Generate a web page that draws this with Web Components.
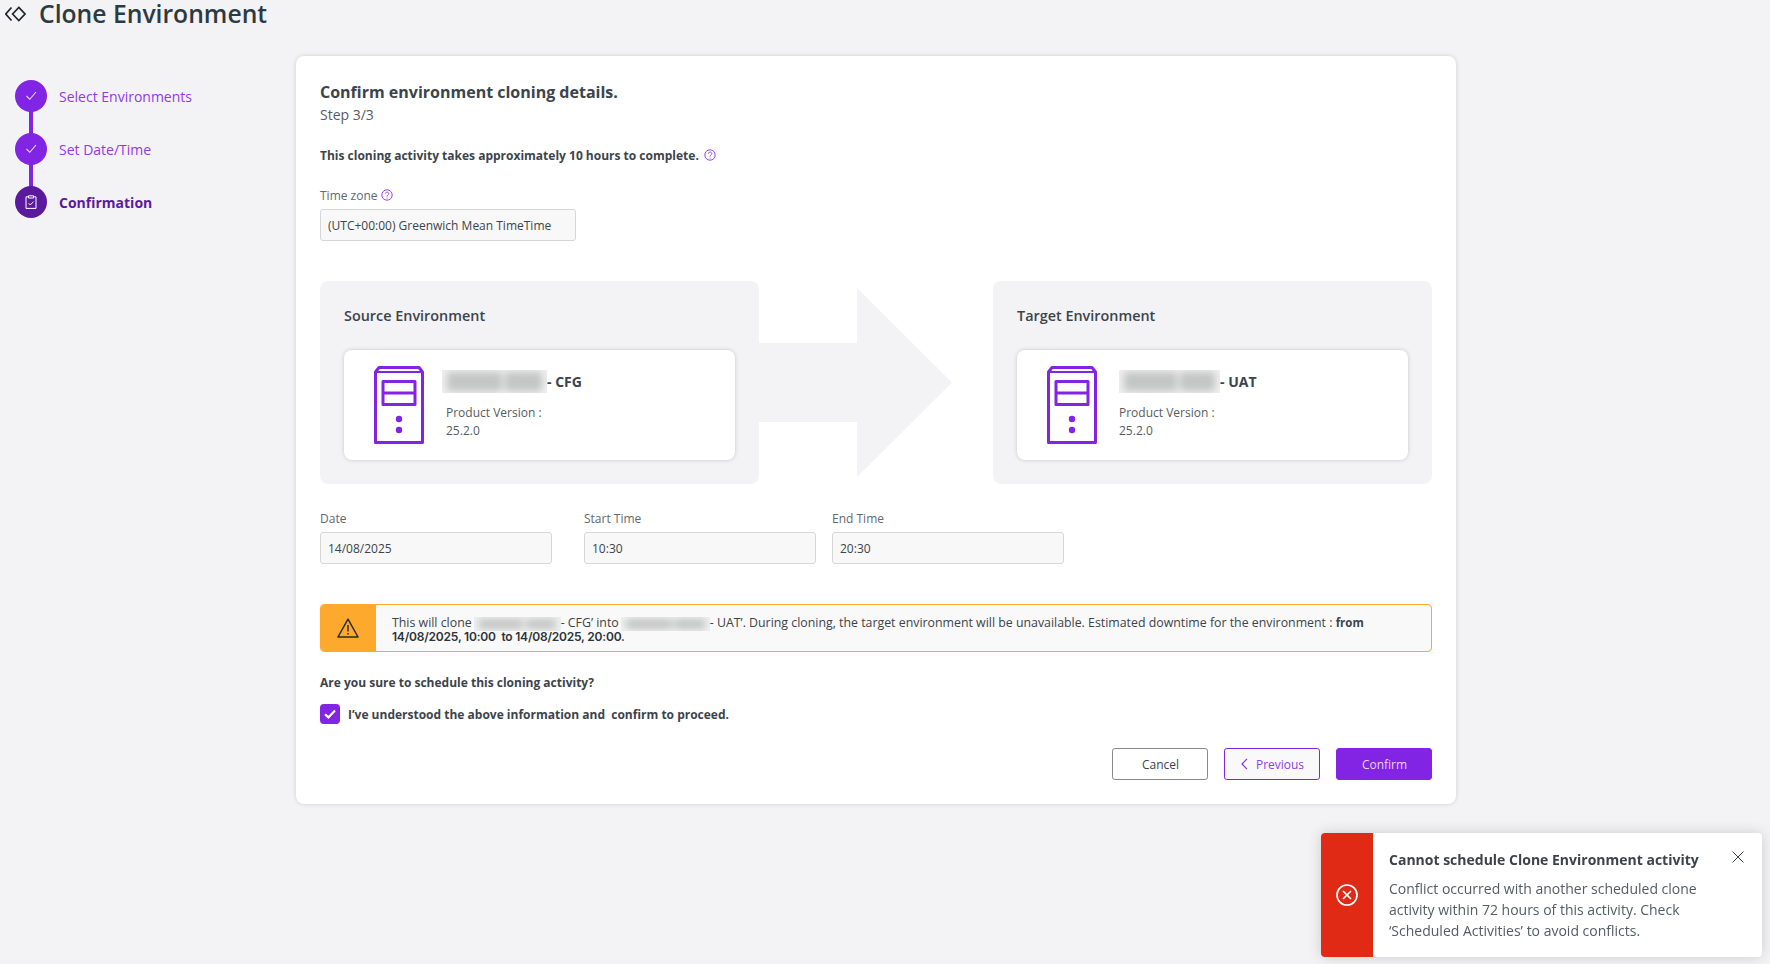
<!DOCTYPE html>
<html lang="en">
<head>
<meta charset="utf-8">
<title>Clone Environment</title>
<style>
  html, body { margin: 0; height: 100%; }
  body {
    background: #f3f2f5;
    color: #3c444b;
    font-family: "Open Sans", "Noto Sans", sans-serif;
    font-size: 13px;
    overflow: hidden;
  }
</style>
</head>
<body>
<clone-page></clone-page>
<error-toast heading="Cannot schedule Clone Environment activity">
  Conflict occurred with another scheduled clone activity within 72 hours of this activity. Check ‘Scheduled Activities’ to avoid conflicts.
</error-toast>

<script>
const CHECK = '<path d="M1.500 6 4.800 9.300 11 2" fill="none" stroke="#eadcf9" stroke-width="1.100"/>';
const HELP = `<svg width="12" height="12" viewBox="0 0 12 12" fill="none" stroke="#9a45ee" stroke-width="1">
  <circle cx="6" cy="6" r="5.200"/><path d="M4.300 4.700C4.400 2.600 7.800 2.700 7.800 4.700 7.800 6 6 6 6 7.600"/><path d="M6 8.700v1"/></svg>`;

class BlurMask extends HTMLElement {
  connectedCallback() {
    this.attachShadow({ mode: 'open' });
    const w = this.getAttribute('w'), h = this.getAttribute('h');
    this.shadowRoot.innerHTML = `
    <style>
      :host { display: inline-block; width: ${w}px; height: ${h}px; overflow: hidden; background: #efefef; vertical-align: middle; }
      .row { display: flex; gap: 3%; height: 100%; padding: 2px 5px; box-sizing: border-box; filter: blur(3.500px); }
      .row span { background: #c4c5c5; height: 100%; border-radius: 3px; }
      .row span:first-child { flex: 3; }
      .row span:last-child { flex: 2; }
    </style>
    <div class="row"><span></span><span></span></div>`;
  }
}

class PageHeader extends HTMLElement {
  connectedCallback() {
    this.attachShadow({ mode: 'open' });
    this.shadowRoot.innerHTML = `
    <style>
      :host { display: flex; align-items: center; height: 28px; padding-left: 5px; }
      svg { width: 21px; height: 16px; flex: none; }
      h1 { margin: 0 0 0 13px; font-size: 24.700px; line-height: 28px; font-weight: 600; color: #2c3a42; }
    </style>
    <svg viewBox="0 0 21 16" fill="none" stroke="#22272b" stroke-width="1.700">
      <path d="M6.500 1.500 0.800 8l5.700 6.500"/>
      <path d="M13.800 1.400 20 8l-6.200 6.600L7.600 8z"/>
    </svg>
    <h1><slot></slot></h1>`;
  }
}

class StepItem extends HTMLElement {
  connectedCallback() {
    this.attachShadow({ mode: 'open' });
    const current = this.hasAttribute('current');
    const icon = current
      ? `<svg width="12" height="14" viewBox="0 0 12 14" fill="none" stroke="#fff" stroke-width="1">
           <path d="M3.500 1.800H1v11.600h10V1.800H8.500"/><path d="M3.500 .8h5v2.200h-5z"/>
           <path d="M3.600 8.200 5.300 10l3.200-3.400" stroke-width=".9"/></svg>`
      : `<svg width="13" height="12" viewBox="0 0 13 12">${CHECK}</svg>`;
    this.shadowRoot.innerHTML = `
    <style>
      :host { display: flex; align-items: center; height: 32px; gap: 12px; position: relative; }
      .dot { width: 32px; height: 32px; border-radius: 50%; background: ${current ? '#5b1a9d' : '#8224e3'};
             display: flex; align-items: center; justify-content: center; flex: none; }
      .label { font-size: 14px; color: ${current ? '#5b1a9d' : '#9239ea'}; font-weight: ${current ? 700 : 400}; }
    </style>
    <span class="dot">${icon}</span><span class="label"><slot></slot></span>`;
  }
}

class StepList extends HTMLElement {
  connectedCallback() {
    this.attachShadow({ mode: 'open' });
    this.shadowRoot.innerHTML = `
    <style>
      :host { display: block; width: 296px; box-sizing: border-box; padding: 24px 0 0 15px; flex: none; position: relative; }
      .items { display: flex; flex-direction: column; gap: 21px; position: relative; }
      .line { position: absolute; left: 14px; top: 16px; bottom: 16px; width: 4px; background: #8224e3; }
      ::slotted(step-item) { z-index: 1; }
    </style>
    <div class="items"><div class="line"></div><slot></slot></div>`;
  }
}

class TextField extends HTMLElement {
  connectedCallback() {
    this.attachShadow({ mode: 'open' });
    const help = this.hasAttribute('help') ? HELP : '';
    this.shadowRoot.innerHTML = `
    <style>
      :host { display: block; width: ${this.getAttribute('width') || 232}px; }
      .label { display: flex; align-items: center; gap: 3px; height: 16px; margin-bottom: 6px; font-size: 12px; color: #62696f; }
      .box { height: 32px; box-sizing: border-box; border: 1px solid #d6d6d6; border-radius: 3px; background: #f8f8f8;
             display: flex; align-items: center; padding: 0 7px; font-size: 12px; color: #3c444b; white-space: nowrap; }
    </style>
    <div class="label">${this.getAttribute('label')}${help}</div>
    <div class="box"><slot></slot></div>`;
  }
}

class ServerIcon extends HTMLElement {
  connectedCallback() {
    this.attachShadow({ mode: 'open' });
    this.shadowRoot.innerHTML = `
    <style>:host { display: block; width: 50px; height: 78px; flex: none; } svg { display: block; }</style>
    <svg width="50" height="78" viewBox="0 0 50 78" fill="none" stroke="#8224e3">
      <path stroke-width="3" stroke-linejoin="round" d="M1.500 6 5 1.500h40L48.500 6v70.500H1.500z"/>
      <path stroke-width="2" d="M1.500 6h47"/>
      <path stroke-width="3" stroke-linejoin="round" d="M9 15.500h32v23H9zM9 27h32"/>
      <circle cx="25" cy="53" r="3.200" fill="#8224e3" stroke="none"/>
      <circle cx="25" cy="64" r="3.200" fill="#8224e3" stroke="none"/>
    </svg>`;
  }
}

class EnvPanel extends HTMLElement {
  connectedCallback() {
    this.attachShadow({ mode: 'open' });
    const shift = this.getAttribute('shift') || 0;
    this.shadowRoot.innerHTML = `
    <style>
      :host { display: block; background: #f3f2f5; border-radius: 8px; padding: 24px; height: 203px; box-sizing: border-box; position: relative; }
      h3 { margin: 0 0 23px; font-size: 14.400px; line-height: 22px; font-weight: 600; color: #3c444b; }
      .tile { background: #fff; border-radius: 8px; box-shadow: 0 0 4px rgba(0,0,0,.18); height: 110px; box-sizing: border-box;
              display: flex; align-items: center; padding-left: 30px; gap: 22px; }
      .name { display: flex; align-items: center; height: 23px; margin-left: ${shift}px; font-size: 14px; font-weight: 700; color: #3c444b; white-space: nowrap; }
      .ver { margin-top: 11px; font-size: 12px; line-height: 18px; color: #555c62; }
    </style>
    <h3>${this.getAttribute('title')}</h3>
    <div class="tile">
      <server-icon></server-icon>
      <div class="info">
        <div class="name"><blur-mask w="${this.getAttribute('mask')}" h="23"></blur-mask>- ${this.getAttribute('env')}</div>
        <div class="ver">Product Version :<br>${this.getAttribute('version')}</div>
      </div>
    </div>`;
  }
}

class WarnAlert extends HTMLElement {
  connectedCallback() {
    this.attachShadow({ mode: 'open' });
    this.shadowRoot.innerHTML = `
    <style>
      :host { display: flex; height: 48px; box-sizing: border-box; border: 1px solid #fda92e; border-radius: 4px; background: #f9f9f9; overflow: hidden; }
      .side { width: 55px; background: #fda92e; display: flex; align-items: center; justify-content: center; flex: none; padding-right: 1px; box-sizing: border-box; }
      .msg { padding: 12px 50px 0 16px; font-size: 12.350px; line-height: 12.500px; color: #3c444b; }
    </style>
    <div class="side">
      <svg width="22" height="20" viewBox="0 0 22 20" fill="none" stroke="#2a2a2a" stroke-width="1.500">
        <path stroke-linejoin="round" d="M11 1.200 1 19h20z"/><path d="M11 7v6.500M11 15v1.600"/>
      </svg>
    </div>
    <div class="msg"><slot></slot></div>`;
  }
}

class AppButton extends HTMLElement {
  connectedCallback() {
    this.attachShadow({ mode: 'open' });
    const kind = this.getAttribute('kind') || 'plain';
    const styles = {
      plain: 'background:#fff;border:1px solid #8a8a8a;color:#3c444b',
      outline: 'background:#f9f9f9;border:1px solid #8224e3;color:#9239ea',
      solid: 'background:#8224e3;border:1px solid #8224e3;color:#e6d5f8'
    };
    const back = this.hasAttribute('back')
      ? '<svg width="7" height="12" viewBox="0 0 7 12" fill="none" stroke="#8224e3" stroke-width="1.100"><path d="M6 .8 1 6l5 5.200"/></svg>' : '';
    this.shadowRoot.innerHTML = `
    <style>
      :host { display: block; }
      button { width: 96px; height: 32px; box-sizing: border-box; border-radius: 3px; font: 12px "Open Sans", sans-serif; ${styles[kind]};
               display: flex; align-items: center; justify-content: center; gap: 8px; padding: 0 0 0 1px; }
    </style>
    <button type="button">${back}<slot></slot></button>`;
  }
}

class ConfirmCheck extends HTMLElement {
  connectedCallback() {
    this.attachShadow({ mode: 'open' });
    this.shadowRoot.innerHTML = `
    <style>
      :host { display: flex; align-items: center; gap: 8px; height: 20px; font-size: 12px; font-weight: 700; color: #3c444b; white-space: pre; }
      .box { width: 20px; height: 20px; border-radius: 4px; background: #8224e3; display: flex; align-items: center; justify-content: center; }
    </style>
    <span class="box"><svg width="12" height="10" viewBox="0 0 12 10" fill="none" stroke="#fff" stroke-width="2.200"><path d="M1 5.200 4.400 8.400 11 1.400"/></svg></span>
    <span><slot></slot></span>`;
  }
}

class ErrorToast extends HTMLElement {
  connectedCallback() {
    this.attachShadow({ mode: 'open' });
    this.shadowRoot.innerHTML = `
    <style>
      :host { position: fixed; left: 1321px; top: 833px; width: 441px; height: 124px; display: flex; background: #fff; border-radius: 4px;
              overflow: hidden; box-shadow: 0 0 14px rgba(0,0,0,.16); font-family: "Open Sans", sans-serif; }
      .side { width: 52px; flex: none; background: #e02a16; display: flex; align-items: center; justify-content: center; }
      .body { padding: 17px 46px 0 16px; flex: 1; position: relative; }
      h4 { margin: 0 0 8px; font-size: 14px; line-height: 20px; font-weight: 700; color: #3c444b; white-space: nowrap; }
      p { margin: 0; font-size: 14px; line-height: 21px; color: #555c62; }
      .close { position: absolute; right: 18px; top: 18px; width: 12px; height: 12px; }
    </style>
    <div class="side">
      <svg width="22" height="22" viewBox="0 0 22 22" fill="none" stroke="#fff" stroke-width="1.700">
        <circle cx="11" cy="11" r="10"/><path d="M7 7l8 8M15 7l-8 8"/>
      </svg>
    </div>
    <div class="body">
      <h4>${this.getAttribute('heading')}</h4>
      <p><slot></slot></p>
      <svg class="close" viewBox="0 0 12 12" fill="none" stroke="#3c444b" stroke-width="1"><path d="M.5.5l11 11M11.500.5l-11 11"/></svg>
    </div>`;
  }
}

class ClonePage extends HTMLElement {
  connectedCallback() {
    this.attachShadow({ mode: 'open' });
    this.shadowRoot.innerHTML = `
    <style>
      :host { display: block; }
      .main { display: flex; margin-top: 28px; }
      .card { width: 1160px; height: 748px; box-sizing: border-box; background: #fff; border-radius: 8px; box-shadow: 0 0 4px rgba(0,0,0,.16); padding: 25px 24px 0; }
      h2 { margin: 0; font-size: 16px; line-height: 22px; font-weight: 700; color: #3c444b; }
      .step { margin-top: 2px; font-size: 14px; line-height: 20px; color: #555c62; }
      .note { display: flex; align-items: center; gap: 5px; margin-top: 20px; height: 20px; font-size: 12px; font-weight: 700; color: #3c444b; }
      .tz { margin-top: 22px; }
      .envs { display: grid; grid-template-columns: 439px 1fr 439px; margin-top: 40px; height: 203px; }
      .arrow { display: block; align-self: center; }
      .times { display: flex; margin-top: 26px; }
      .times text-field + text-field { margin-left: 32px; }
      .times text-field:last-child { margin-left: 16px; }
      warn-alert { margin-top: 40px; }
      .ask { margin-top: 21px; line-height: 20px; font-size: 12px; font-weight: 700; color: #3c444b; }
      confirm-check { margin-top: 11px; }
      .actions { display: flex; justify-content: flex-end; gap: 16px; margin-top: 24px; }
      .dates { font-family: Inter, "Open Sans", sans-serif; font-size: 12px; font-weight: 600; letter-spacing: -.2px; color: #2c3338; }
      blur-mask { margin: 0 0 0 2px; }
      b { font-weight: 700; font-size: 11.500px; }
    </style>
    <page-header>Clone Environment</page-header>
    <div class="main">
      <step-list>
        <step-item>Select Environments</step-item>
        <step-item>Set Date/Time</step-item>
        <step-item current>Confirmation</step-item>
      </step-list>
      <section class="card">
        <h2>Confirm environment cloning details.</h2>
        <div class="step">Step 3/3</div>
        <div class="note">This cloning activity takes approximately 10 hours to complete. ${HELP}</div>
        <text-field class="tz" label="Time zone" help width="256">(UTC+00:00) Greenwich Mean TimeTime</text-field>
        <div class="envs">
          <env-panel title="Source Environment" env="CFG" version="25.2.0" mask="105" shift="-4"></env-panel>
          <svg class="arrow" width="193" height="189" viewBox="0 0 193 189"><path fill="#f3f2f5" d="M0 55h98V0l95 94.500-95 94.500v-55H0z"/></svg>
          <env-panel title="Target Environment" env="UAT" version="25.2.0" mask="101"></env-panel>
        </div>
        <div class="times">
          <text-field label="Date">14/08/2025</text-field>
          <text-field label="Start Time">10:30</text-field>
          <text-field label="End Time">20:30</text-field>
        </div>
        <warn-alert>This will clone<blur-mask w="87" h="14"></blur-mask>- CFG’ into<blur-mask w="89" h="14"></blur-mask>- UAT’. During cloning, the target environment will be unavailable. Estimated downtime for the environment : <b>from</b> <span class="dates">14/08/2025, 10:00&nbsp; to 14/08/2025, 20:00.</span></warn-alert>
        <div class="ask">Are you sure to schedule this cloning activity?</div>
        <confirm-check>I’ve understood the above information and  confirm to proceed.</confirm-check>
        <div class="actions">
          <app-button>Cancel</app-button>
          <app-button kind="outline" back>Previous</app-button>
          <app-button kind="solid">Confirm</app-button>
        </div>
      </section>
    </div>`;
  }
}

customElements.define('blur-mask', BlurMask);
customElements.define('page-header', PageHeader);
customElements.define('step-item', StepItem);
customElements.define('step-list', StepList);
customElements.define('text-field', TextField);
customElements.define('server-icon', ServerIcon);
customElements.define('env-panel', EnvPanel);
customElements.define('warn-alert', WarnAlert);
customElements.define('app-button', AppButton);
customElements.define('confirm-check', ConfirmCheck);
customElements.define('error-toast', ErrorToast);
customElements.define('clone-page', ClonePage);
</script>
</body>
</html>
